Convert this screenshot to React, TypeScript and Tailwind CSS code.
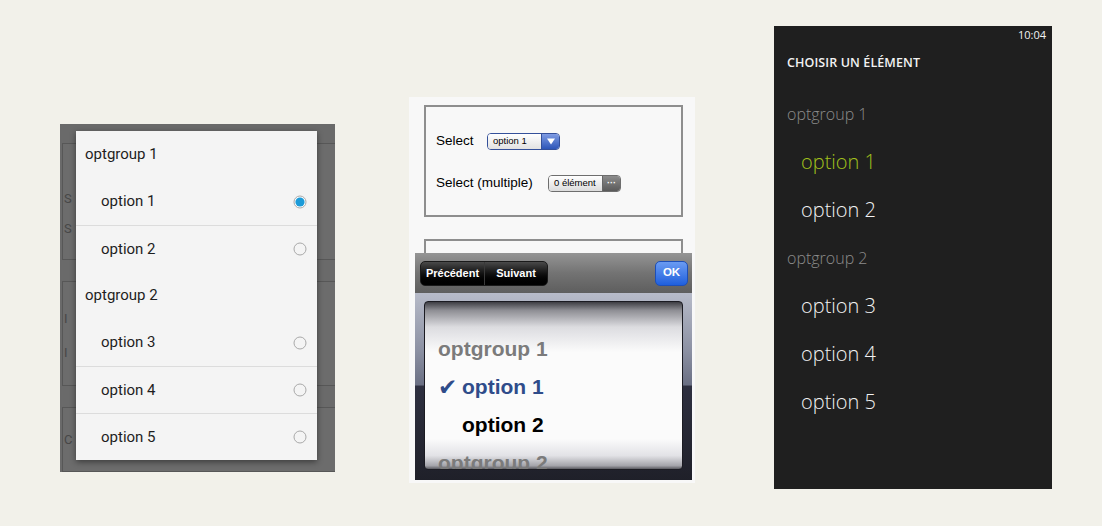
import React from 'react';

type Row = { label: string; group?: boolean; selected?: boolean };

const rows: Row[] = [
  { label: 'optgroup 1', group: true },
  { label: 'option 1', selected: true },
  { label: 'option 2' },
  { label: 'optgroup 2', group: true },
  { label: 'option 3' },
  { label: 'option 4' },
  { label: 'option 5' },
];

const Radio = ({ checked }: { checked?: boolean }) => (
  <svg width="14" height="14" viewBox="0 0 14 14">
    <circle cx="7" cy="7" r="6" fill={checked ? '#ffffff' : 'none'} stroke="#a9a9a9" strokeWidth="1" />
    {checked && <circle cx="7" cy="7" r="4.6" fill="#1c9bd8" />}
  </svg>
);

// Android dialog over a dimmed page
const AndroidPicker = () => (
  <div className="relative mt-[124px] h-[348px] w-[275px] shrink-0 overflow-hidden bg-[#6a6a6a]">
    <div className="flex h-full flex-col gap-[21px] pl-[2px] pt-[19px]">
      <div className="-mr-4 h-[117px] border border-[#575757] bg-[#6c6c6c] pl-[1px] pt-[40px] text-[13px] leading-[30px] text-[#474747]" style={{ fontFamily: 'Roboto, sans-serif' }}>
        <div>S</div>
        <div>S</div>
      </div>
      <div className="-mr-4 h-[105px] border border-[#575757] bg-[#6c6c6c] pl-[1px] pt-[20px] text-[13px] leading-[34px] text-[#474747]" style={{ fontFamily: 'Roboto, sans-serif' }}>
        <div>I</div>
        <div>I</div>
      </div>
      <div className="-mr-4 flex-1 border border-[#575757] bg-[#6c6c6c] pl-[1px] pt-[22px] text-[13px] text-[#474747]" style={{ fontFamily: 'Roboto, sans-serif' }}>
        <div>C</div>
      </div>
    </div>
    <div
      className="absolute left-[16px] top-[7px] w-[241px] bg-[#f4f4f4] shadow-[0_2px_6px_rgba(0,0,0,0.45)]"
      style={{ fontFamily: 'Roboto, "Noto Sans", sans-serif' }}
    >
      {rows.map((r, i) => {
        const prev = rows[i - 1];
        const divider = !r.group && prev && !prev.group;
        return (
          <div
            key={r.label}
            className={`flex h-[47px] items-center text-[15px] text-[#1e1e1e] ${divider ? 'border-t border-[#dcdcdc]' : ''} ${r.group ? 'pl-[9px]' : 'pl-[25px] pr-[10px]'}`}
          >
            <span className="flex-1">{r.label}</span>
            {!r.group && <Radio checked={r.selected} />}
          </div>
        );
      })}
    </div>
  </div>
);

// iOS form + picker wheel
const IosPicker = () => (
  <div className="ml-[74px] mt-[97px] flex h-[386px] w-[286px] shrink-0 flex-col bg-[#f8f8f8] pt-[8px]" style={{ fontFamily: '"Liberation Sans", Arial, sans-serif' }}>
    <div className="ml-[15px] h-[112px] w-[259px] border-2 border-[#8e8e8e] pl-[10px] pt-[24px] text-[13.5px] text-black">
      <div className="flex h-[20px] items-center">
        <span className="w-[51px]">Select</span>
        <div className="flex h-[17px] w-[73px] overflow-hidden rounded-[4px] border border-[#34509a]">
          <div className="flex flex-1 items-center bg-gradient-to-b from-white to-[#e2e2e2] pl-[5px] text-[9.5px]">option 1</div>
          <div className="flex w-[18px] items-center justify-center border-l border-[#34509a] bg-gradient-to-b from-[#7f9be3] to-[#2d55b8]">
            <svg width="8" height="7" viewBox="0 0 8 7"><path d="M0 0.5h8L4 6.5z" fill="#ffffff" /></svg>
          </div>
        </div>
      </div>
      <div className="mt-[22px] flex h-[20px] items-center">
        <span className="w-[112px]">Select (multiple)</span>
        <div className="flex h-[17px] w-[73px] overflow-hidden rounded-[4px] border border-[#6e6e6e]">
          <div className="flex flex-1 items-center bg-gradient-to-b from-white to-[#dcdcdc] pl-[5px] text-[9.5px]">0 élément</div>
          <div className="flex w-[18px] items-center justify-center border-l border-[#666] bg-gradient-to-b from-[#8c8c8c] to-[#5a5a5a] text-[9px] font-bold leading-none text-white">···</div>
        </div>
      </div>
    </div>
    <div className="ml-[15px] mt-[22px] h-[14px] w-[259px] border-2 border-b-0 border-[#8e8e8e]" />
    <div className="ml-[6px] mr-[3px] flex flex-col">
      <div className="flex h-[40px] items-center justify-between bg-gradient-to-b from-[#959595] via-[#737373] to-[#5e5e5e] pl-[5px] pr-[4px]">
        <div className="flex h-[25px] w-[128px] overflow-hidden rounded-[5px] border border-[#1a1a1a] bg-gradient-to-b from-[#4a4a4a] via-[#121212] to-black text-[11px] font-bold text-white">
          <div className="flex w-[64px] items-center justify-center border-r border-[#3a3a3a]">Précédent</div>
          <div className="flex flex-1 items-center justify-center">Suivant</div>
        </div>
        <div className="flex h-[25px] w-[33px] items-center justify-center rounded-[5px] border border-[#1d4fb8] bg-gradient-to-b from-[#6a9bf2] to-[#1f5fdc] text-[11.5px] font-bold text-white">OK</div>
      </div>
      <div className="h-[187px] bg-[linear-gradient(to_bottom,#b7bbc9_0%,#8d92a4_30%,#6b7084_49%,#2e3040_50%,#1f2029_100%)] pb-[10px] pl-[9px] pr-[9px] pt-[8px]">
        <div className="h-full overflow-hidden rounded-[4px] border border-[#1b1b22] bg-[linear-gradient(to_bottom,#3e3e44_0%,#8e8e94_5%,#dcdce0_15%,#fbfbfb_30%,#fbfbfb_82%,#e2e2e6_92%,#a4a4aa_98%,#5a5a60_100%)] pl-[13px] pt-[28px] text-[21px] font-bold">
          <div className="flex h-[38px] items-center text-[#7b7b7b]">optgroup 1</div>
          <div className="flex h-[38px] items-center text-[#2f4c8a]">
            <span className="w-[24px] text-[23px] leading-none" style={{ fontFamily: '"DejaVu Sans", sans-serif' }}>✔</span>
            <span>option 1</span>
          </div>
          <div className="flex h-[38px] items-center text-black">
            <span className="w-[24px]" />
            <span>option 2</span>
          </div>
          <div className="flex h-[38px] items-center text-[#7b7b7b]">optgroup 2</div>
        </div>
      </div>
    </div>
  </div>
);

// Windows Phone full-screen list
const WindowsPicker = () => (
  <div className="ml-[79px] mt-[26px] flex h-[463px] w-[278px] shrink-0 flex-col bg-[#1f1f1f] pl-[13px] text-[#f2f2f2]" style={{ fontFamily: '"Open Sans", "Noto Sans", sans-serif' }}>
    <div className="pr-[6px] pt-[2px] text-right text-[11px] leading-[14px]">10:04</div>
    <div className="mt-[13px] text-[12.5px] font-semibold leading-[16px] tracking-[0.1px]">CHOISIR UN ÉLÉMENT</div>
    <div className="mt-[19px] flex flex-col font-light">
      {rows.map((r) => (
        <div
          key={r.label}
          className={`flex h-[48px] items-center ${r.group ? 'text-[16px] text-[#8c8c8c]' : 'pl-[14px] text-[20px]'} ${r.selected ? 'text-[#a2c11c]' : ''}`}
        >
          {r.label}
        </div>
      ))}
    </div>
  </div>
);

export default function App() {
  return (
    <div className="flex h-[526px] w-[1102px] items-start overflow-hidden bg-[#f2f1ea] pl-[60px]">
      <AndroidPicker />
      <IosPicker />
      <WindowsPicker />
    </div>
  );
}
